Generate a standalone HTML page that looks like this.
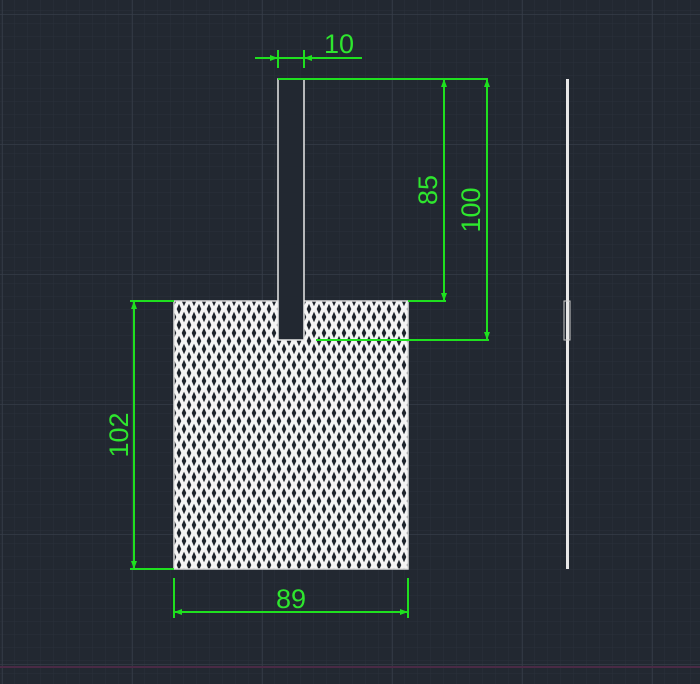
<!DOCTYPE html>
<html><head><style>html,body{margin:0;padding:0;background:#222831;}svg{display:block}</style></head>
<body>
<svg width="700" height="684" xmlns="http://www.w3.org/2000/svg">
<defs>
<pattern id="minor" width="13" height="13" patternUnits="userSpaceOnUse" x="1" y="10"><path d="M0 0H13M0 0V13" stroke="#2a313b" stroke-width="1" fill="none"/></pattern>
<pattern id="major" width="130" height="130" patternUnits="userSpaceOnUse" x="2" y="14"><path d="M0 0H130M0 0V130" stroke="#353c47" stroke-width="1.5" fill="none"/></pattern>
<pattern id="mesh" width="10" height="16" patternUnits="userSpaceOnUse" x="174" y="301">
<rect width="10" height="16" fill="#f4f4f4"/>
<path d="M5 2.8 L7.3 8 L5 13.2 L2.7 8Z" fill="#1e242c"/>
<path d="M0 -5.2 L2.3 0 L0 5.2 L-2.3 0Z M10 -5.2 L12.3 0 L10 5.2 L7.7 0Z M0 10.8 L2.3 16 L0 21.2 L-2.3 16Z M10 10.8 L12.3 16 L10 21.2 L7.7 16Z" fill="#1e242c"/>
</pattern>
</defs>
<rect width="700" height="684" fill="#222831"/>
<rect width="700" height="684" fill="url(#minor)"/>
<rect width="700" height="684" fill="url(#major)"/>
<line x1="0" y1="667" x2="700" y2="667" stroke="#4a2a45" stroke-width="2"/>
<rect x="174" y="301" width="234" height="268" fill="url(#mesh)" stroke="#ddd" stroke-width="1.5"/>
<rect x="278" y="79" width="26" height="261" fill="#222831" stroke="#e8e8e8" stroke-width="1.5"/>
<rect x="566" y="79" width="3" height="490" fill="#e8e8e8"/>
<rect x="564" y="301" width="6" height="39" fill="none" stroke="#ccc" stroke-width="1"/>
<g stroke="#1fe01f" stroke-width="2" fill="none">
<line x1="255" y1="58" x2="362" y2="58"/>
<line x1="278" y1="50" x2="278" y2="68"/>
<line x1="304" y1="50" x2="304" y2="68"/>
<line x1="278" y1="79" x2="488" y2="79"/>
<line x1="444" y1="79" x2="444" y2="301"/>
<line x1="408" y1="301" x2="446" y2="301"/>
<line x1="487" y1="79" x2="487" y2="340"/>
<line x1="316" y1="340" x2="489" y2="340"/>
<line x1="134" y1="301" x2="134" y2="569"/>
<line x1="130" y1="301" x2="174" y2="301"/>
<line x1="130" y1="569" x2="174" y2="569"/>
<line x1="174" y1="612" x2="408" y2="612"/>
<line x1="174" y1="578" x2="174" y2="618"/>
<line x1="408" y1="578" x2="408" y2="618"/>
</g>
<g fill="#1fe01f">
<path d="M278 58l-8-3v6z M304 58l8-3v6z M444 79l-3 8h6z M444 301l-3-8h6z M487 79l-3 8h6z M487 340l-3-8h6z M134 301l-3 8h6z M134 569l-3-8h6z M174 612l8-3v6z M408 612l-8-3v6z"/>
</g>
<g fill="#2ee62e" font-family="'Liberation Sans',sans-serif" font-size="27">
<text x="324" y="53">10</text>
<text x="291" y="608" text-anchor="middle">89</text>
<text transform="translate(437,190) rotate(-90)" text-anchor="middle">85</text>
<text transform="translate(480,210) rotate(-90)" text-anchor="middle">100</text>
<text transform="translate(128,435) rotate(-90)" text-anchor="middle">102</text>
</g>
</svg>
</body></html>
